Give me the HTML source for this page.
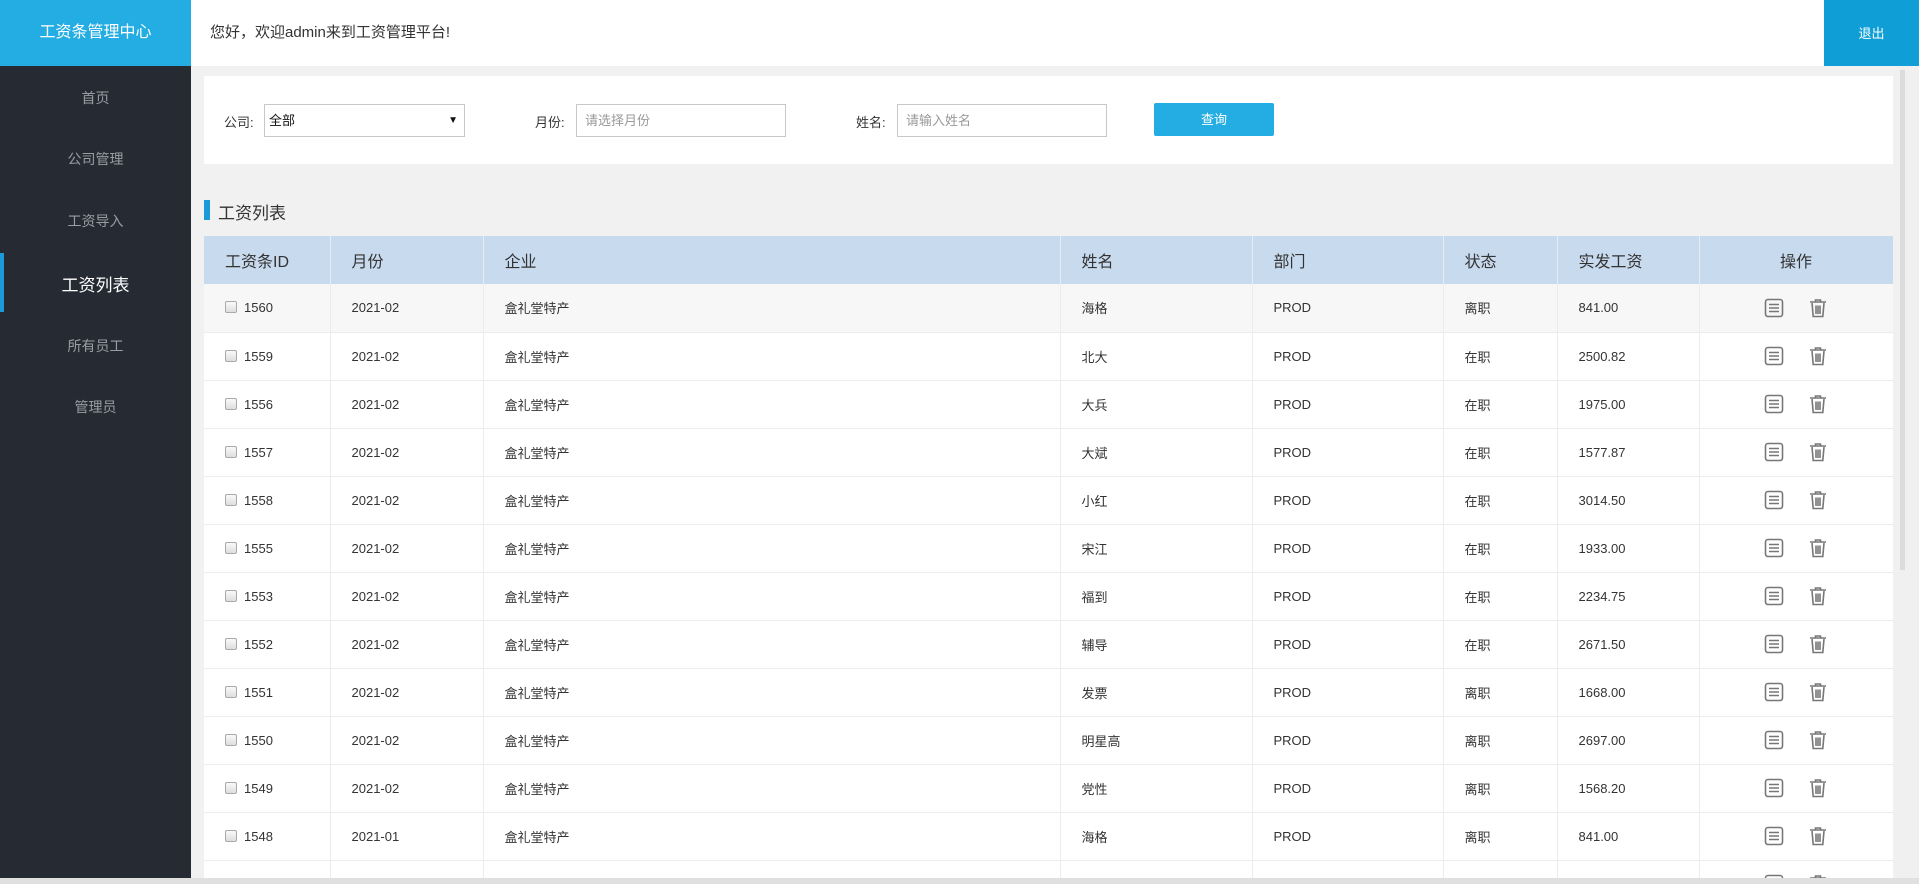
<!DOCTYPE html>
<html><head><meta charset="utf-8"><style>
*{margin:0;padding:0;box-sizing:border-box}
body{width:1919px;height:884px;overflow:hidden;background:#f1f1f1;font-family:"Liberation Sans","Noto Sans CJK SC",sans-serif;position:relative;color:#333}
.abs{position:absolute}
#logo{left:0;top:0;width:191px;height:66px;background:#24ade2;color:#fff;font-size:16px;line-height:66px;text-align:center}
#top{left:191px;top:0;width:1633px;height:66px;background:#fff;font-size:15px;line-height:66px;padding-left:19px;color:#333}
#out{left:1824px;top:0;width:95px;height:66px;background:#0f9fd6;color:#fff;font-size:13px;line-height:68px;text-align:center}
#side{left:0;top:66px;width:191px;height:812px;background:#252a33}
.nav{position:absolute;left:0;width:191px;text-align:center;color:#9a9da3;font-size:14px}
.nav.on{color:#fff;font-size:17px}
#bar{left:0;top:253px;width:4px;height:59px;background:#1c9ad8}
#search{left:204px;top:76px;width:1689px;height:88px;background:#fff;font-size:13px}
.lbl{position:absolute;top:36px;font-size:13px;color:#333}
.inp{position:absolute;top:28px;height:33px;border:1px solid #c8c8c8;background:#fff;font-size:13px;color:#999;line-height:31px;padding-left:8px}
#btn{left:950px;top:27px;width:120px;height:33px;background:#24ade2;color:#fff;text-align:center;line-height:33px;font-size:13px;border-radius:2px}
#tbar{left:204px;top:200px;width:6px;height:20px;background:#1c9ad8}
#ttl{left:218px;top:199px;font-size:17px;color:#333}
#tw{left:204px;top:236px;width:1689px;height:642px;overflow:hidden}
table{width:1689px;border-collapse:collapse;table-layout:fixed}
th{height:48px;background:#c8daee;font-weight:normal;text-align:left;font-size:16px;padding-left:21px;border-right:1px solid #e6edf5;color:#333}
td{height:48px;font-size:13px;padding-left:21px;border-right:1px solid #ececec;border-bottom:1px solid #ececec;background:#fff;color:#333}
tr.g td{background:#f7f7f7}
.cb{display:inline-block;width:12px;height:12px;border:1px solid #aaa;border-radius:2px;background:linear-gradient(#fafafa,#ddd);vertical-align:-1px;margin-right:7px}
.ops{text-align:center;padding-left:0}
.ops svg{vertical-align:middle;margin:0 12px}
#sb{left:1895px;top:66px;width:24px;height:812px;background:#f0f0f0}
#sbt{left:1900px;top:70px;width:5px;height:500px;background:#dcdcdc}
#hb{left:0;top:878px;width:1919px;height:6px;background:#e0e0e0;z-index:5}
</style></head><body>
<div id="logo" class="abs">工资条管理中心</div>
<div id="top" class="abs">您好，欢迎admin来到工资管理平台!</div>
<div id="out" class="abs">退出</div>
<div id="side" class="abs">
<div class="nav" style="top:22px">首页</div>
<div class="nav" style="top:83px">公司管理</div>
<div class="nav" style="top:145px">工资导入</div>
<div class="nav on" style="top:205px">工资列表</div>
<div class="nav" style="top:270px">所有员工</div>
<div class="nav" style="top:331px">管理员</div>
</div>
<div id="bar" class="abs"></div>
<div id="search" class="abs">
<span class="lbl" style="left:20px">公司:</span>
<div class="inp" style="left:60px;width:201px;color:#111;padding-left:4px">全部<span style="position:absolute;right:6px;font-size:10px">▼</span></div>
<span class="lbl" style="left:331px">月份:</span>
<div class="inp" style="left:372px;width:210px">请选择月份</div>
<span class="lbl" style="left:652px">姓名:</span>
<div class="inp" style="left:693px;width:210px">请输入姓名</div>
<div id="btn" class="abs">查询</div>
</div>
<div id="tbar" class="abs"></div>
<div id="ttl" class="abs">工资列表</div>
<div id="tw" class="abs">
<table>
<colgroup><col style="width:126px"><col style="width:153px"><col style="width:577px"><col style="width:192px"><col style="width:191px"><col style="width:114px"><col style="width:142px"><col style="width:194px"></colgroup>
<tr><th>工资条ID</th><th>月份</th><th>企业</th><th>姓名</th><th>部门</th><th>状态</th><th>实发工资</th><th style="text-align:center;padding-left:0">操作</th></tr>
</table>
</div>
<div id="sb" class="abs"></div><div id="sbt" class="abs"></div>
<div id="hb" class="abs"></div>
<script>
var d=[["1560","2021-02","海格","离职","841.00"],["1559","2021-02","北大","在职","2500.82"],["1556","2021-02","大兵","在职","1975.00"],["1557","2021-02","大斌","在职","1577.87"],["1558","2021-02","小红","在职","3014.50"],["1555","2021-02","宋江","在职","1933.00"],["1553","2021-02","福到","在职","2234.75"],["1552","2021-02","辅导","在职","2671.50"],["1551","2021-02","发票","离职","1668.00"],["1550","2021-02","明星高","离职","2697.00"],["1549","2021-02","党性","离职","1568.20"],["1548","2021-01","海格","离职","841.00"],["1547","2021-01","北大","在职","2500.82"]];
var ic='<svg width="20" height="20" viewBox="0 0 20 20"><rect x="1.5" y="1.5" width="17" height="17" rx="2.5" fill="none" stroke="#777" stroke-width="1.6"/><path d="M5 6.5h10M5 10h10M5 13.5h10" stroke="#777" stroke-width="1.6"/></svg><svg width="20" height="20" viewBox="0 0 20 20"><path d="M2 4h16M7.5 4V2h5v2M4 5l1.2 13.5h9.6L16 5M8 7.5v8.5M10 7.5v8.5M12 7.5v8.5" fill="none" stroke="#777" stroke-width="1.6"/></svg>';
var t=document.querySelector('table'),h='';
d.forEach(function(r,i){h+='<tr'+(i==0?' class="g"':'')+'><td><span class="cb"></span>'+r[0]+'</td><td>'+r[1]+'</td><td>盒礼堂特产</td><td>'+r[2]+'</td><td>PROD</td><td>'+r[3]+'</td><td>'+r[4]+'</td><td class="ops">'+ic+'</td></tr>'});
t.insertAdjacentHTML('beforeend',h);
</script>
</body></html>
